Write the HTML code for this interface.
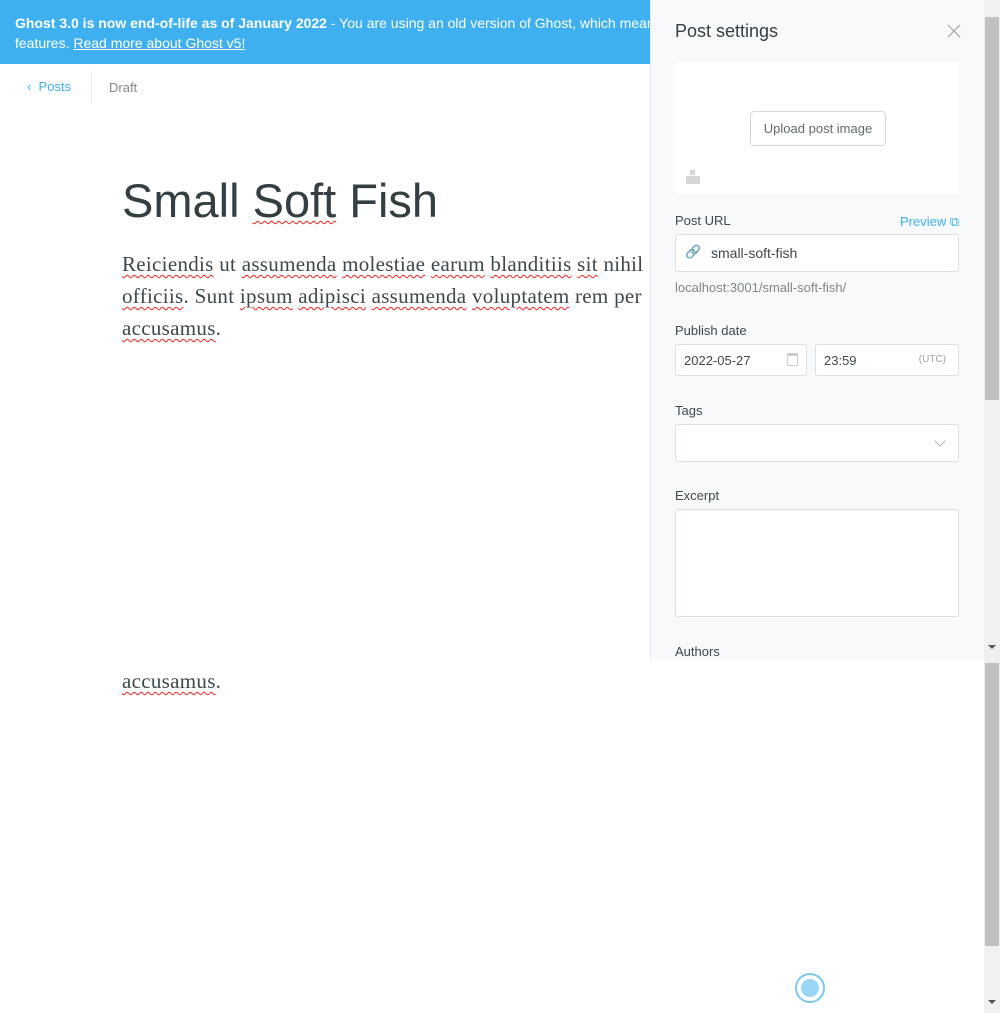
<!DOCTYPE html>
<html><head><style>
*{box-sizing:border-box;margin:0;padding:0}
body{width:1000px;height:1013px;overflow:hidden;background:#fff;font-family:"Liberation Sans",sans-serif;position:relative;color:#15212a}
.banner{position:absolute;left:0;top:0;width:984px;height:64px;background:#3eb0ef;color:#fff;font-size:14px;line-height:20px;padding:13px 15px;overflow:hidden;white-space:nowrap}
.banner a{color:#fff;text-decoration:underline}
.sq{text-decoration:underline wavy #e22;text-decoration-thickness:1px;text-underline-offset:3px}
h1{position:absolute;left:122px;top:173px;font-size:47px;font-weight:normal;color:#343f44;letter-spacing:0}
.body{position:absolute;left:122px;top:248px;font-family:"Liberation Serif",serif;font-size:21px;letter-spacing:0.3px;line-height:32px;color:#3c484e;white-space:nowrap}
.panel{position:absolute;left:650px;top:0;width:334px;height:660px;background:#f7f9fb;border-left:1px solid #e3ebf1;overflow:hidden}
.lbl{position:absolute;left:24px;font-size:13px;color:#3c484e}
.inp{position:absolute;left:24px;width:284px;background:#fff;border:1px solid #d7e2e9;border-radius:3px}
.sb{position:absolute;left:984px;width:16px;background:#f0f0f0}
</style></head><body>
<div class="banner"><b>Ghost 3.0 is now end-of-life as of January 2022</b> - You are using an old version of Ghost, which means you won't get the latest<br>features. <a>Read more about Ghost v5!</a></div>
<div style="position:absolute;left:27px;top:79px;font-size:13px;color:#3eb0ef">&lsaquo;&nbsp; Posts</div>
<div style="position:absolute;left:91px;top:70px;width:1px;height:34px;background:#e3ebf1"></div>
<div style="position:absolute;left:109px;top:80px;font-size:13px;color:#7d878a">Draft</div>
<h1>Small <span class="sq">Soft</span> Fish</h1>
<div class="body"><span class="sq">Reiciendis</span> ut <span class="sq">assumenda</span> <span class="sq">molestiae</span> <span class="sq">earum</span> <span class="sq">blanditiis</span> <span class="sq">sit</span> nihil<br><span class="sq">officiis</span>. Sunt <span class="sq">ipsum</span> <span class="sq">adipisci</span> <span class="sq">assumenda</span> <span class="sq">voluptatem</span> rem per<br><span class="sq">accusamus</span>.</div>
<div class="body" style="top:665px"><span class="sq">accusamus</span>.</div>

<div class="panel">
<div style="position:absolute;left:24px;top:21px;font-size:18px;color:#343f44">Post settings</div>
<svg style="position:absolute;left:296px;top:24px" width="14" height="14" viewBox="0 0 14 14"><path d="M1 1L13 13M13 1L1 13" stroke="#9aa3a8" stroke-width="1.2"/></svg>
<div style="position:absolute;left:24px;top:63px;width:284px;height:130px;background:#fff;border-radius:3px">
 <div style="position:absolute;left:75px;top:48px;width:136px;height:35px;border:1px solid #cfd8de;border-radius:4px;font-size:13px;color:#5d6a70;text-align:center;line-height:33px">Upload post image</div>
 <div style="position:absolute;left:11px;top:113px;width:14px;height:8px;background:#d6d6d6"></div>
 <div style="position:absolute;left:15px;top:107px;width:5px;height:5px;background:#d6d6d6"></div>
</div>
<div class="lbl" style="top:213px">Post URL</div>
<div style="position:absolute;left:249px;top:214px;font-size:13px;color:#3eb0ef">Preview &#x29C9;</div>
<div class="inp" style="top:234px;height:38px"><span style="position:absolute;left:9px;top:9px;color:#d0dde4;font-size:13px">&#x1F517;</span><span style="position:absolute;left:35px;top:10px;font-size:14px;color:#3c484e">small-soft-fish</span></div>
<div style="position:absolute;left:24px;top:280px;font-size:13px;color:#7d878a">localhost:3001/small-soft-fish/</div>
<div class="lbl" style="top:323px">Publish date</div>
<div class="inp" style="top:344px;width:132px;height:32px;font-size:13px;padding:8px 8px;color:#3c484e">2022-05-27<span style="position:absolute;right:8px;top:8px;width:11px;height:13px;border:1px solid #ccc;border-top-width:3px"></span></div>
<div class="inp" style="left:164px;top:344px;width:144px;height:32px;font-size:13px;padding:8px 8px;color:#3c484e">23:59<span style="position:absolute;right:12px;top:9px;font-size:10px;color:#9aa3a8">(UTC)</span></div>
<div class="lbl" style="top:403px">Tags</div>
<div class="inp" style="top:424px;height:38px"><span style="position:absolute;right:14px;top:12px;width:8px;height:8px;border-right:1px solid #abb4b9;border-bottom:1px solid #abb4b9;transform:rotate(45deg)"></span></div>
<div class="lbl" style="top:488px">Excerpt</div>
<div class="inp" style="top:509px;height:108px"></div>
<div class="lbl" style="top:644px">Authors</div>
</div>
<div class="sb" style="top:0;height:660px"><div style="position:absolute;left:1px;top:17px;width:14px;height:383px;background:#c1c1c1"></div><div style="position:absolute;left:4px;top:645px;border:4px solid transparent;border-top:4px solid #555"></div></div>
<div class="sb" style="top:660px;height:353px"><div style="position:absolute;left:1px;top:3px;width:14px;height:283px;background:#c1c1c1"></div><div style="position:absolute;left:4px;top:340px;border:4px solid transparent;border-top:4px solid #555"></div></div>
<div style="position:absolute;left:795px;top:973px;width:30px;height:30px;border:2px solid #7cc8f2;border-radius:50%;background:#fff"><div style="position:absolute;left:4px;top:4px;width:18px;height:18px;border-radius:50%;background:#9ad6f6"></div></div>
</body></html>
